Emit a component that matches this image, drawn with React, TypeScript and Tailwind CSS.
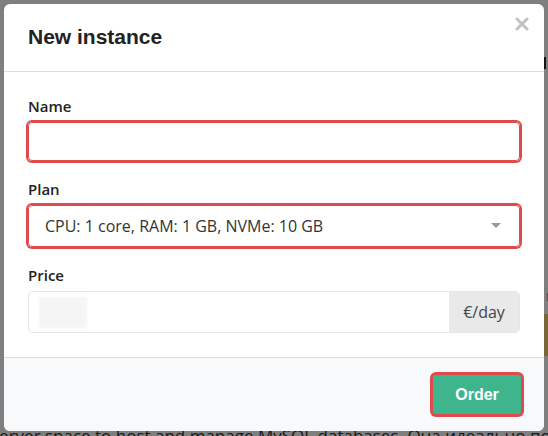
function Field({ label, children }: { label: string; children: React.ReactNode }) {
  return (
    <div className="flex flex-col">
      <label className="mb-[6px] text-[15px] leading-5 font-semibold text-[#222]">{label}</label>
      {children}
    </div>
  );
}

export default function App() {
  return (
    <div className="relative h-[436px] w-[548px] overflow-hidden bg-white font-['Open_Sans',sans-serif]">
      {/* page content behind the dialog */}
      <div className="absolute top-[423px] left-[-9px] whitespace-nowrap text-[17px] text-[#333]">
        server space to host and manage MySQL databases. Она идеально подходит
      </div>
      <div className="absolute top-[57px] right-[2px] h-[12px] w-[2px] bg-[#1b2a4a]" />
      <div className="absolute top-[284px] right-[-4px] text-[15px] text-[#999]">r</div>
      <div className="absolute top-[314px] right-0 h-[42px] w-[5px] bg-[#f0cf6a]" />

      <div className="absolute inset-0 bg-black/50 p-1">
        <div className="flex h-[427px] flex-col overflow-hidden rounded-[6px] bg-white">
          <div className="flex h-[68px] items-start justify-between border-b border-[#dedede] pl-6 pr-[15px]">
            <h2 className="pt-[21px] font-['Liberation_Sans',Arial,sans-serif] text-[21px] leading-6 font-bold text-[#222]">
              New instance
            </h2>
            <button className="pt-[13px]">
              <svg width="14" height="14" viewBox="0 0 14 14">
                <path d="M2 2l10 10M12 2L2 12" stroke="#c2c2c2" strokeWidth="3" strokeLinecap="round" />
              </svg>
            </button>
          </div>

          <div className="flex flex-1 flex-col gap-[18px] px-6 pt-6">
            <Field label="Name">
              <input
                className="h-[39px] rounded-[4px] border border-[#e04a4d] px-3 outline-none ring-2 ring-[#e04a4d]"
                type="text"
              />
            </Field>
            <Field label="Plan">
              <div className="flex h-[42px] items-center justify-between rounded-[4px] border border-[#e04a4d] pr-[18px] pl-4 text-[16px] text-[#333] ring-2 ring-[#e04a4d]">
                <span>CPU: 1 core, RAM: 1 GB, NVMe: 10 GB</span>
                <svg width="10" height="6" viewBox="0 0 10 6">
                  <path d="M0 0h10L5 5z" fill="#999" />
                </svg>
              </div>
            </Field>
            <Field label="Price">
              <div className="flex h-[42px] overflow-hidden rounded-[5px] border border-[#e6e6e6]">
                <div className="flex flex-1 items-center pl-[10px]">
                  <div className="h-[31px] w-[48px] bg-[#f5f5f5] blur-[1px]" />
                </div>
                <div className="flex w-[70px] items-center justify-center bg-[#e9e9e9] text-[16px] text-[#444]">
                  €/day
                </div>
              </div>
            </Field>
          </div>

          <div className="flex h-[74px] items-center justify-end border-t border-[#dedede] bg-[#f8f9fb] pr-[23px]">
            <button className="h-[39px] w-[88px] rounded-[3px] bg-[#3fb58d] font-['Liberation_Sans',Arial,sans-serif] text-[16px] font-bold text-white ring-[3px] ring-[#e04a4d]">
              Order
            </button>
          </div>
        </div>
      </div>
    </div>
  );
}
